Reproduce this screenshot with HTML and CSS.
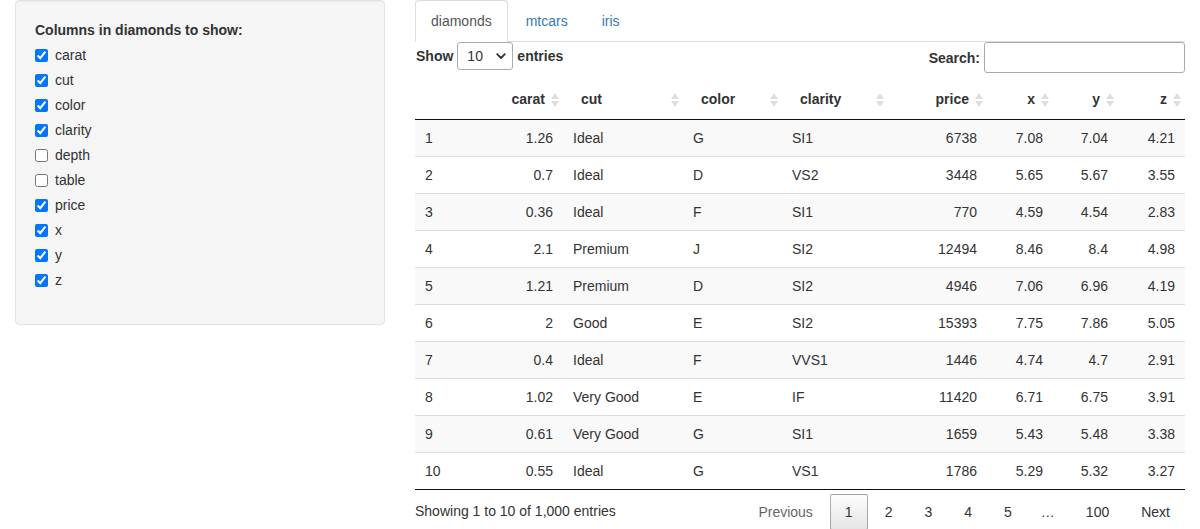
FILE: index.html
```html
<!DOCTYPE html>
<html>
<head>
<meta charset="utf-8">
<link rel="stylesheet" href="styles.css">
</head>
<body>
<div class="page">
  <div class="sidebar">
    <div class="well">
      <div class="form-group">
        <div class="control-label">Columns in diamonds to show:</div>
        <div class="options">
          <label class="check"><input type="checkbox" checked><span>carat</span></label>
          <label class="check"><input type="checkbox" checked><span>cut</span></label>
          <label class="check"><input type="checkbox" checked><span>color</span></label>
          <label class="check"><input type="checkbox" checked><span>clarity</span></label>
          <label class="check"><input type="checkbox"><span>depth</span></label>
          <label class="check"><input type="checkbox"><span>table</span></label>
          <label class="check"><input type="checkbox" checked><span>price</span></label>
          <label class="check"><input type="checkbox" checked><span>x</span></label>
          <label class="check"><input type="checkbox" checked><span>y</span></label>
          <label class="check"><input type="checkbox" checked><span>z</span></label>
        </div>
      </div>
    </div>
  </div>
  <div class="main">
    <ul class="nav-tabs">
      <li class="tab active"><a>diamonds</a></li>
      <li class="tab"><a>mtcars</a></li>
      <li class="tab"><a>iris</a></li>
    </ul>
    <div class="dt-controls">
      <div class="dt-length">
        <span class="lbl">Show</span>
        <div class="select-wrap">
          <select class="dt-select"><option>10</option><option>25</option><option>50</option><option>100</option></select>
          <svg class="chev" width="10" height="7" viewBox="0 0 10 7"><path d="M1.2 1.2 L5 5 L8.8 1.2" fill="none" stroke="#333" stroke-width="1.8" stroke-linecap="round" stroke-linejoin="round"/></svg>
        </div>
        <span class="lbl">entries</span>
      </div>
      <div class="dt-filter">
        <span class="lbl">Search:</span>
        <input class="search" type="search">
      </div>
    </div>
    <table class="dt">
      <colgroup>
        <col class="w-idx"><col class="w-carat"><col class="w-cut"><col class="w-color"><col class="w-clarity"><col class="w-price"><col class="w-x"><col class="w-y"><col class="w-z">
      </colgroup>
      <thead>
        <tr>
          <th></th>
          <th class="num sort">carat</th>
          <th class="sort">cut</th>
          <th class="sort">color</th>
          <th class="sort">clarity</th>
          <th class="num sort">price</th>
          <th class="num sort">x</th>
          <th class="num sort">y</th>
          <th class="num sort">z</th>
        </tr>
      </thead>
      <tbody>
        <tr><td>1</td><td class="num">1.26</td><td>Ideal</td><td>G</td><td>SI1</td><td class="num">6738</td><td class="num">7.08</td><td class="num">7.04</td><td class="num">4.21</td></tr>
        <tr><td>2</td><td class="num">0.7</td><td>Ideal</td><td>D</td><td>VS2</td><td class="num">3448</td><td class="num">5.65</td><td class="num">5.67</td><td class="num">3.55</td></tr>
        <tr><td>3</td><td class="num">0.36</td><td>Ideal</td><td>F</td><td>SI1</td><td class="num">770</td><td class="num">4.59</td><td class="num">4.54</td><td class="num">2.83</td></tr>
        <tr><td>4</td><td class="num">2.1</td><td>Premium</td><td>J</td><td>SI2</td><td class="num">12494</td><td class="num">8.46</td><td class="num">8.4</td><td class="num">4.98</td></tr>
        <tr><td>5</td><td class="num">1.21</td><td>Premium</td><td>D</td><td>SI2</td><td class="num">4946</td><td class="num">7.06</td><td class="num">6.96</td><td class="num">4.19</td></tr>
        <tr><td>6</td><td class="num">2</td><td>Good</td><td>E</td><td>SI2</td><td class="num">15393</td><td class="num">7.75</td><td class="num">7.86</td><td class="num">5.05</td></tr>
        <tr><td>7</td><td class="num">0.4</td><td>Ideal</td><td>F</td><td>VVS1</td><td class="num">1446</td><td class="num">4.74</td><td class="num">4.7</td><td class="num">2.91</td></tr>
        <tr><td>8</td><td class="num">1.02</td><td>Very Good</td><td>E</td><td>IF</td><td class="num">11420</td><td class="num">6.71</td><td class="num">6.75</td><td class="num">3.91</td></tr>
        <tr><td>9</td><td class="num">0.61</td><td>Very Good</td><td>G</td><td>SI1</td><td class="num">1659</td><td class="num">5.43</td><td class="num">5.48</td><td class="num">3.38</td></tr>
        <tr><td>10</td><td class="num">0.55</td><td>Ideal</td><td>G</td><td>VS1</td><td class="num">1786</td><td class="num">5.29</td><td class="num">5.32</td><td class="num">3.27</td></tr>
      </tbody>
    </table>
    <div class="dt-footer">
      <div class="dt-info">Showing 1 to 10 of 1,000 entries</div>
      <div class="dt-paging">
        <span class="pbtn disabled">Previous</span>
        <span class="pbtn current">1</span>
        <span class="pbtn">2</span>
        <span class="pbtn">3</span>
        <span class="pbtn">4</span>
        <span class="pbtn">5</span>
        <span class="ellipsis">…</span>
        <span class="pbtn">100</span>
        <span class="pbtn">Next</span>
      </div>
    </div>
  </div>
</div>
</body>
</html>
```
FILE: styles.css
```css
* { box-sizing: border-box; }
html, body { margin: 0; padding: 0; }
body {
  font-family: "Liberation Sans", Arial, sans-serif;
  font-size: 14px;
  line-height: 20px;
  color: #333;
  background: #fff;
  overflow: hidden;
}
.page {
  display: flex;
  gap: 30px;
  padding: 0 15px;
}
.sidebar { width: 370px; flex: none; }
.well {
  background: #f5f5f5;
  border: 1px solid #e3e3e3;
  border-radius: 4px;
  box-shadow: inset 0 1px 1px rgba(0,0,0,.05);
  padding: 19px;
}
.form-group { margin-bottom: 15px; }
.control-label { font-weight: bold; margin-bottom: 5px; }
.options { display: flex; flex-direction: column; gap: 5px; }
.check {
  display: flex;
  align-items: center;
  height: 20px;
  gap: 7px;
}
.check input {
  width: 13px;
  height: 13px;
  margin: 0;
  flex: none;
}
.main { width: 770px; flex: none; }
.nav-tabs {
  list-style: none;
  margin: 0;
  padding: 0;
  display: flex;
  border-bottom: 1px solid #ddd;
}
.tab { margin-right: 2px; margin-bottom: -1px; }
.tab a {
  display: block;
  padding: 10px 15px;
  line-height: 20px;
  border: 1px solid transparent;
  border-radius: 4px 4px 0 0;
  color: #337ab7;
}
.tab.active a {
  color: #555;
  background: #fff;
  border-color: #ddd #ddd transparent #ddd;
}
.dt-controls {
  display: flex;
  justify-content: space-between;
  align-items: flex-start;
  height: 37px;
}
.lbl { font-weight: bold; }
.dt-length {
  display: flex;
  align-items: center;
  height: 28px;
  gap: 4px;
  padding-left: 1px;
}
.select-wrap { position: relative; width: 56px; height: 28px; }
.dt-select {
  appearance: none;
  -webkit-appearance: none;
  width: 56px;
  height: 28px;
  border: 1px solid #aaa;
  border-radius: 3px;
  background: #fff;
  padding: 0 0 0 9px;
  font-family: "Liberation Sans", Arial, sans-serif;
  font-size: 14px;
  color: #333;
  margin: 0;
}
.chev { position: absolute; right: 7px; top: 11px; pointer-events: none; }
.dt-filter {
  display: flex;
  align-items: center;
  height: 31px;
  gap: 4px;
}
.search {
  width: 201px;
  height: 31px;
  border: 1px solid #aaa;
  border-radius: 3px;
  margin: 0;
  padding: 4px;
  background: #fff;
}
.dt {
  width: 770px;
  table-layout: fixed;
  border-collapse: separate;
  border-spacing: 0;
}
.w-idx { width: 76px; }
.w-carat { width: 72px; }
.w-cut { width: 120px; }
.w-color { width: 99px; }
.w-clarity { width: 106px; }
.w-price { width: 99px; }
.w-x { width: 66px; }
.w-y { width: 65px; }
.w-z { width: 67px; }
.dt th {
  position: relative;
  padding: 10px 18px;
  font-weight: bold;
  text-align: left;
  line-height: 20px;
  border-bottom: 1px solid #111;
  white-space: nowrap;
}
.dt th.num, .dt td.num { text-align: right; }
.dt th.sort::before, .dt th.sort::after {
  content: "";
  position: absolute;
  right: 4px;
  width: 0;
  height: 0;
  border-left: 4.5px solid transparent;
  border-right: 4.5px solid transparent;
}
.dt th.sort::before { top: 14px; border-bottom: 6px solid #dedede; }
.dt th.sort::after { top: 22px; border-top: 6px solid #dedede; }
.dt td {
  padding: 8px 10px;
  line-height: 20px;
  border-top: 1px solid #ddd;
  white-space: nowrap;
}
.dt tbody tr:first-child td { border-top: none; }
.dt tbody tr:nth-child(odd) td { background: #f9f9f9; }
.dt tbody tr:last-child td { border-bottom: 1px solid #111; }
.dt-footer {
  display: flex;
  justify-content: space-between;
  align-items: flex-start;
}
.dt-info { padding-top: 10.5px; }
.dt-paging { display: flex; padding-top: 4px; }
.pbtn {
  display: inline-block;
  min-width: 21px;
  padding: 7px 14px;
  margin-left: 2px;
  text-align: center;
  border: 1px solid transparent;
  border-radius: 2px;
  color: #333;
}
.pbtn.disabled { color: #666; }
.pbtn.current {
  border: 1px solid rgba(0,0,0,0.3);
  background: linear-gradient(to bottom, rgba(230,230,230,0.1) 0%, rgba(0,0,0,0.1) 100%);
}
.ellipsis { padding: 8px 14px; color: #333; }
```
